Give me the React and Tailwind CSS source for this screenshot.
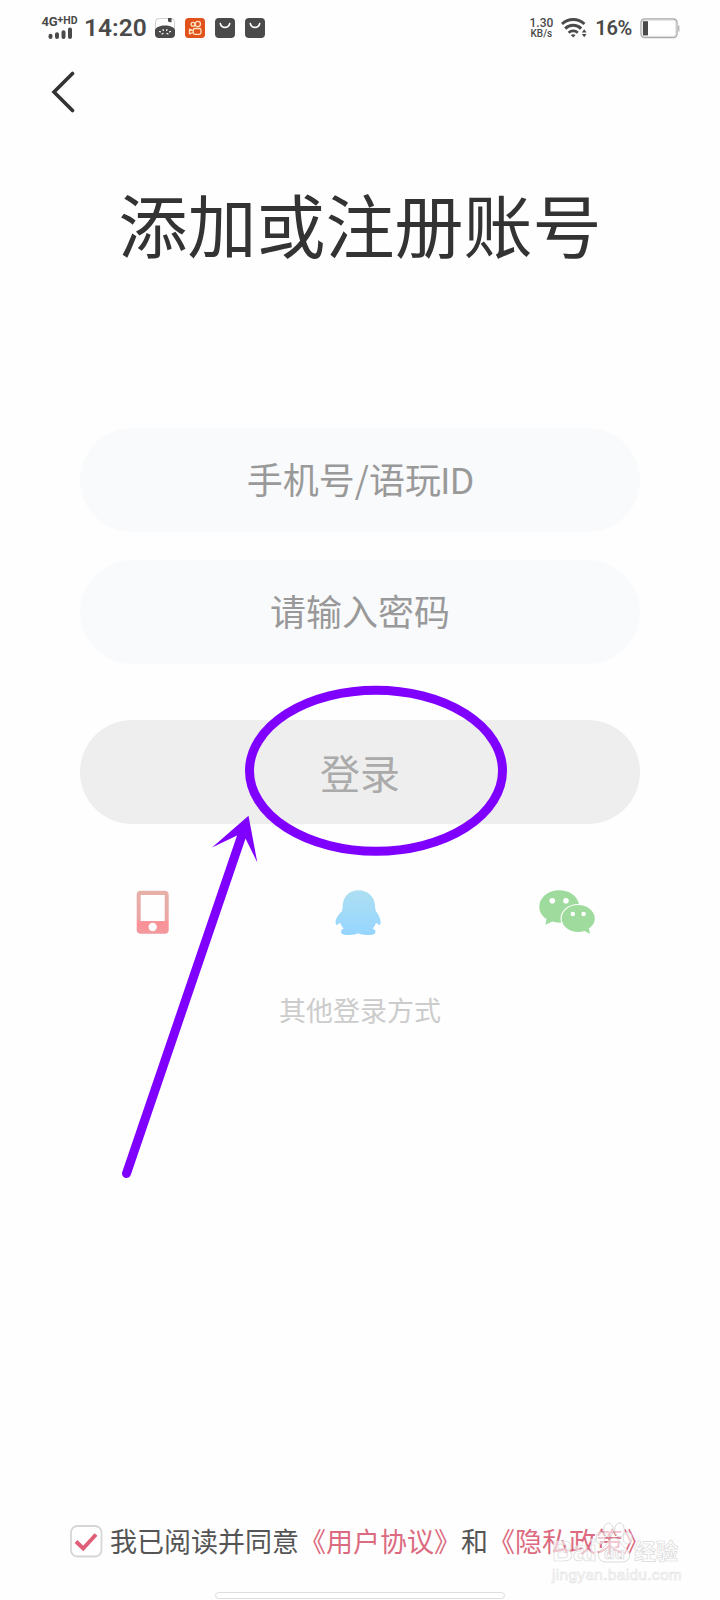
import React from 'react';

const LOGIN_METHODS = [
  { id: 'phone', icon: PhoneIcon, box: 'flex w-[41px] justify-start' },
  { id: 'qq', icon: QQIcon, box: 'flex w-[46px] justify-center' },
  { id: 'wechat', icon: WechatIcon, box: 'flex w-[57px] justify-end' },
];

function SignalIcon() {
  return (
    <svg width="26" height="13" viewBox="0 0 26 13" fill="none" stroke="#4a4a4a" strokeWidth="4" strokeLinecap="round">
      <path d="M3.500 8.800v1.200M10 7.300v2.700M16.500 5.300v4.700M23 2.500v7.500" />
    </svg>
  );
}

function PandaIcon() {
  return (
    <svg width="20" height="20" viewBox="0 0 20 20">
      <rect x="0.4" y="0.4" width="19.2" height="19.2" rx="4" fill="#fff" stroke="#a8a8a8" strokeWidth="0.6" />
      <path d="M13 0h3.5v4.5l-3.5-1z" fill="#4a4a4a" />
      <path d="M0 12C1 9 5 7.500 10 7.500s9 1.500 10 4.500v4a4 4 0 0 1-4 4H4a4 4 0 0 1-4-4z" fill="#4a4a4a" />
      <path d="M4.500 13.500l1 .4M8 11.500l.4 1M12 11.500l-.4 1M15.500 13.500l-1 .4M7 16l1-.6M13 16l-1-.6" stroke="#fff" strokeWidth="1.200" strokeLinecap="round" />
    </svg>
  );
}

function KuaishouIcon() {
  return (
    <svg width="20" height="20" viewBox="0 0 20 20" fill="none" stroke="#fbe3c0" strokeWidth="1.3">
      <rect width="20" height="20" rx="3.500" fill="#e2521c" stroke="none" />
      <circle cx="8" cy="6.300" r="1.900" />
      <circle cx="12.800" cy="6" r="2.600" />
      <rect x="8.200" y="10.500" width="7.800" height="5.800" rx="1.800" />
      <path d="M8 12.500l-3.500-1.300v4.600L8 14.500" strokeLinejoin="round" />
    </svg>
  );
}

function BagIcon() {
  return (
    <svg width="20" height="20" viewBox="0 0 20 20">
      <rect width="20" height="20" rx="4" fill="#4a4a4a" />
      <path d="M5.300 5.600c1.200 5 8.200 5 9.400 0" fill="none" stroke="#fff" strokeWidth="1.700" strokeLinecap="round" />
    </svg>
  );
}

function WifiIcon() {
  return (
    <svg width="26" height="20" viewBox="0 0 26 20" fill="none" stroke="#4a4a4a" strokeWidth="3">
      <path d="M1 6a16.500 16.500 0 0 1 22.400 0" />
      <path d="M4.200 10.600a11.500 11.500 0 0 1 16 0" />
      <path d="M7.600 14.700a6.700 6.700 0 0 1 9.200 0" strokeWidth="2.600" />
      <path d="M9.800 17L12.200 19.600l2.400-2.600q-2.400-1.400-4.800 0z" fill="#4a4a4a" stroke="none" />
      <path d="M20.800 14.600l2.400-3.300 2.400 3.300zM20.800 16h4.800L23.200 19.300z" fill="#4a4a4a" stroke="none" />
    </svg>
  );
}

function BatteryIcon() {
  return (
    <svg width="40" height="21" viewBox="0 0 40 21">
      <rect x="1" y="1" width="36" height="18.500" rx="3.500" fill="#fff" stroke="#aaa" strokeWidth="1.400" />
      <rect x="2.200" y="2.200" width="33.600" height="16.100" rx="2.500" fill="none" stroke="#dedede" />
      <rect x="3" y="3.200" width="5" height="14.200" fill="#4a4a4a" />
      <rect x="38" y="7.500" width="1.500" height="6" fill="#bbb" />
    </svg>
  );
}

function PhoneIcon() {
  return (
    <svg width="33" height="44" viewBox="0 0 33 44">
      <defs>
        <linearGradient id="phoneFill" x2="0" y2="1">
          <stop offset="0" stopColor="#e6b0a8" />
          <stop offset="0.650" stopColor="#eba6a6" />
          <stop offset="0.750" stopColor="#fa9096" />
          <stop offset="1" stopColor="#f29a9e" />
        </linearGradient>
      </defs>
      <path fillRule="evenodd" fill="url(#phoneFill)" d="M4.700 .7h24a4 4 0 0 1 4 4v35a4 4 0 0 1-4 4h-24a4 4 0 0 1-4-4V4.700a4 4 0 0 1 4-4zM4.700 5v26h24V5zM20.900 37a4.200 4.200 0 1 0-8.400 0a4.200 4.200 0 1 0 8.400 0z" />
    </svg>
  );
}

function QQIcon() {
  return (
    <svg width="46" height="46" viewBox="0 0 46 46">
      <defs>
        <linearGradient id="qqFill" x2="0" y2="1">
          <stop offset="0" stopColor="#addff2" />
          <stop offset="1" stopColor="#96d5ff" />
        </linearGradient>
      </defs>
      <path fill="url(#qqFill)" d="M23.500 .3C14 .3 8.400 7 7.800 14.500c-.1 2.500-.3 4.500-.9 6.800C3.500 24.500 .5 28.500 .6 32.500c.1 2.500 1 3 2.200 2 .9-.7 1.700-1.300 2.600-1.400 .6 2.200 1.700 3.800 3.300 5.300-2.200 .8-2.900 2.200-2.600 3.800 .5 2.400 4 3 8.400 2.900 3.500-.1 6.400-.8 8.600-1.800 2.200 1 5.100 1.700 8.600 1.800 4.400 .1 8.200-.5 8.700-2.900 .3-1.600-.6-3-2.800-3.800 1.600-1.500 2.700-3.100 3.300-5.300 .9 .1 1.700 .7 2.600 1.400 1.200 1 2 .5 2.100-2 .1-4-2-8.300-4.700-11.200-.6-2.300-.9-4.300-1-6.800C39.200 7 33 .3 23.500 .3z" />
    </svg>
  );
}

function WechatIcon() {
  return (
    <svg width="57" height="45" viewBox="0 0 57 45" fill="#9edb9d">
      <path d="M20.300 .3C9 .3 .3 7.600 .3 16.700c0 5.200 2.700 9.500 7.300 12.400L6.300 34.800l7.200-3.200c2.400 .7 4.600 1.100 7.200 1.100L36 31 40 14C38 5.500 30 .3 20.300 .3z" />
      <path d="M39.200 14C29.300 14 21.500 20.500 21.500 28.500S29.300 43.200 39.200 43.200c10 0 18-6.700 18-14.700S49.200 14 39.200 14z" fill="#fff" />
      <path d="M39.200 15C30 15 22.700 21 22.700 28.500c0 7.500 7.300 13.500 16.500 13.500 2.200 0 4.300-.3 6.200-1l5.800 2.800-1.400-5.200c3.700-2.500 6-6 6-10.100C55.800 21 48.400 15 39.200 15z" />
      <g fill="#fff">
        <circle cx="13.300" cy="10.700" r="2.800" />
        <circle cx="27" cy="10.700" r="2.800" />
        <circle cx="33.800" cy="24" r="2.200" />
        <circle cx="44.600" cy="24" r="2.200" />
      </g>
    </svg>
  );
}

function StatusBar() {
  return (
    <header className="flex h-[56px] items-center pl-[40px] pr-[40px] font-[Roboto,sans-serif] text-[#4a4a4a]">
      <div className="flex w-[39px] flex-col items-center">
        <div className="flex items-start whitespace-nowrap font-bold leading-[11px]">
          <span className="text-[13px] tracking-[-0.3px]">4G</span>
          <span className="text-[11px] leading-[8px]">+</span>
          <span className="text-[10.5px] leading-[9px]">HD</span>
        </div>
        <SignalIcon />
      </div>
      <span className="ml-[5px] w-[63px] text-[24.5px] font-semibold leading-none">14:20</span>
      <div className="ml-[8px] flex gap-[10px]">
        <PandaIcon />
        <KuaishouIcon />
        <BagIcon />
        <BagIcon />
      </div>
      <div className="ml-auto flex items-center">
        <div className="flex flex-col items-center font-medium">
          <span className="text-[12px] leading-[11px]">1.30</span>
          <span className="text-[10px] leading-[10px]">KB/s</span>
        </div>
        <div className="ml-[8px]"><WifiIcon /></div>
        <span className="ml-[8px] text-[20px] font-semibold leading-none tracking-[-0.3px]">16%</span>
        <div className="ml-[8px]"><BatteryIcon /></div>
      </div>
    </header>
  );
}

function Watermark() {
  return (
    <div className="absolute left-[552px] top-[1518px] h-[66px] w-[140px] whitespace-nowrap font-['Liberation_Sans','Noto_Sans_CJK_SC',sans-serif] text-white/60">
      <div className="flex h-[48px] items-end font-bold">
        <span className="w-[43px] text-[29px] leading-[30px] [-webkit-text-stroke:0.7px_#dadada]">Bai</span>
        <svg className="mb-[2px]" width="38" height="43" viewBox="0 0 38 43" fill="#fff" fillOpacity="0.6" stroke="#d6d6d6" strokeWidth="0.9">
          <ellipse cx="5.500" cy="17" rx="4.500" ry="6" />
          <ellipse cx="13.500" cy="9" rx="4.800" ry="7" />
          <ellipse cx="24.500" cy="9" rx="4.800" ry="7" />
          <ellipse cx="32.500" cy="17" rx="4.500" ry="6" />
          <path d="M19 17c5 0 6 5 10 9s7 6 5 11-9 4-15 4-13 1-15-4 1-7 5-11 5-9 10-9z" />
          <text x="9" y="38" fontSize="17" fontWeight="700" fontFamily="Liberation Sans" strokeWidth="0.7">du</text>
        </svg>
        <span className="ml-[1px] text-[22px] leading-[29px] [-webkit-text-stroke:0.7px_#dadada]">经验</span>
      </div>
      <div className="mt-[-1px] text-[15.5px] leading-[19px] tracking-[0.3px] [-webkit-text-stroke:0.6px_#e2e2e2]">jingyan.baidu.com</div>
    </div>
  );
}

// Ellipse around the login button and the arrow that points to it
function Annotation() {
  return (
    <svg className="pointer-events-none absolute left-0 top-0" width="720" height="1600" viewBox="0 0 720 1600">
      <ellipse cx="376" cy="770.700" rx="126.500" ry="80.500" fill="none" stroke="#8000ff" strokeWidth="9" />
      <path d="M126.500 1173.500L243 832" stroke="#8000ff" strokeWidth="9" strokeLinecap="round" />
      <path d="M248.500 815.700L212 847.500L237 835.500L245.500 838.500L257.300 862.500z" fill="#8000ff" />
    </svg>
  );
}

export default function App() {
  return (
    <div className="relative flex h-[1600px] w-[720px] flex-col overflow-hidden bg-[#fefefe] font-['Noto_Sans_CJK_SC',sans-serif]">
      <StatusBar />
      <nav className="flex h-[72px] items-center pl-[50px]">
        <svg width="26" height="42" viewBox="0 0 26 42" fill="none" stroke="#333" strokeWidth="3.600" strokeLinecap="round">
          <path d="M22.500 2.500L4 21L22.500 39.500" />
        </svg>
      </nav>

      <h1 className="mt-[44px] text-center text-[69px] leading-[102px] text-[#333]">添加或注册账号</h1>

      <main className="mt-[154px] flex flex-col px-[80px]">
        <div className="flex h-[104px] items-center justify-center rounded-full bg-[#f9fafc] pb-[4px] text-[36px] text-[#999]">
          手机号/语玩<span className="ml-[-1px] tracking-[-1px]">ID</span>
        </div>
        <div className="mt-[28px] flex h-[104px] items-center justify-center rounded-full bg-[#f9fafc] pb-[4px] text-[36px] text-[#999]">
          请输入密码
        </div>
        <button className="mt-[56px] flex h-[104px] items-center justify-center rounded-full bg-[#eee] text-[40px] text-[#aaa]">
          登录
        </button>
        <div className="mt-[66px] flex h-[46px] justify-between pl-[56px] pr-[44px]">
          {LOGIN_METHODS.map(({ id, icon: Icon, box }) => (
            <div key={id} className={box}>
              <Icon />
            </div>
          ))}
        </div>
        <p className="mt-[54px] text-center text-[27px] leading-[40px] text-[#ccc]">其他登录方式</p>
      </main>

      <footer className="mt-auto flex flex-col">
        <div className="flex items-center pl-[70px] text-[27px] leading-[40px] text-[#555]">
          <svg width="33" height="33" viewBox="0 0 33 33" fill="none">
            <rect x="1" y="1" width="30.500" height="30.500" rx="6.500" fill="#fff" stroke="#d6d6d6" strokeWidth="1.800" />
            <path d="M6 16.500l7.200 7L26 9.500" stroke="#df5f78" strokeWidth="4" />
          </svg>
          <p className="ml-[7px] whitespace-nowrap">
            我已阅读并同意<span className="text-[#dc6a80]">《用户协议》</span>和<span className="text-[#dc6a80]">《隐私政策》</span>
          </p>
        </div>
        <div className="mb-[1px] ml-[215px] mt-[31px] h-[7px] w-[290px] rounded-full border border-[#ddd] bg-white" />
      </footer>

      <Watermark />
      <Annotation />
    </div>
  );
}
